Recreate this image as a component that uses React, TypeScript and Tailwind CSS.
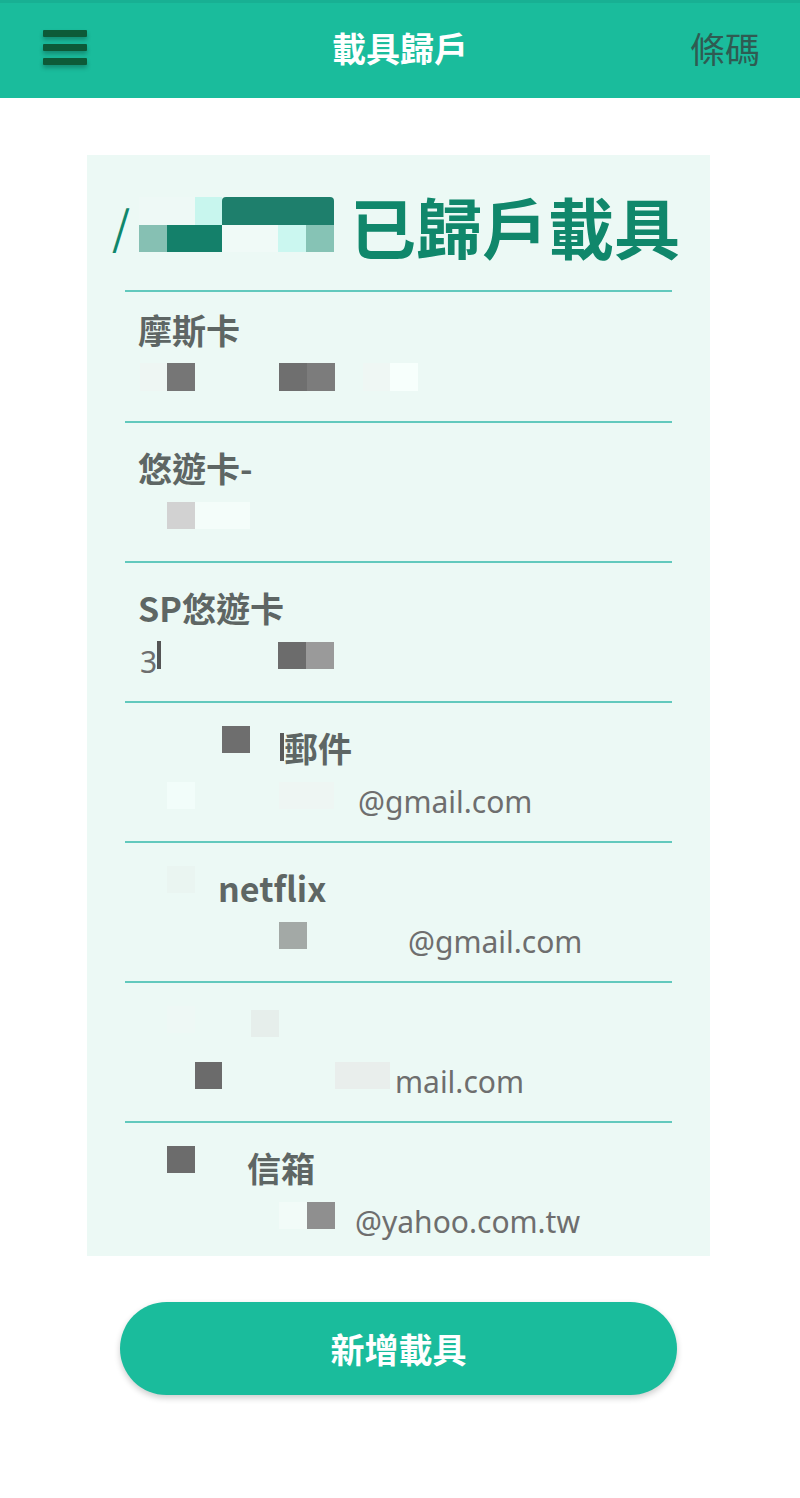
import React from 'react';

const cjk = { fontFamily: '"Noto Sans CJK TC", "Noto Sans", sans-serif' };
const latin = { fontFamily: '"Noto Sans", "Noto Sans CJK TC", sans-serif' };

function Row({ first, children }: { first?: boolean; children: React.ReactNode }) {
    return (
        <div>
            <div className="h-[2px] bg-[#62c9bd]" />
            <div className={first ? 'pt-[13px] pb-[20px]' : 'pt-[20px] pb-[22px]'}>{children}</div>
        </div>
    );
}

function Label({ children }: { children: React.ReactNode }) {
    return <div className="flex h-[48px] items-center text-[34px] font-bold text-[#5e6664]" style={cjk}>{children}</div>;
}

function Value({ children }: { children: React.ReactNode }) {
    return <div className="flex h-[48px] items-center text-[30px] text-[#6e6e6e]" style={latin}>{children}</div>;
}

export default function App() {
    return (
        <div className="min-h-[1498px] w-[800px] bg-white" style={cjk}>

            {/* Header */}
            <header className="grid h-[98px] grid-cols-[1fr_auto_1fr] items-center border-t-[3px] border-[#18b093] bg-[#1abc9c]">
                <div className="ml-[43px] flex w-[44px] flex-col gap-[7px] pb-[6px]">
                    <span className="h-[7px] rounded-[1px] bg-[#0d5a38] shadow-[0_3px_4px_rgba(0,0,0,0.25)]" />
                    <span className="h-[7px] rounded-[1px] bg-[#0d5a38] shadow-[0_3px_4px_rgba(0,0,0,0.25)]" />
                    <span className="h-[7px] rounded-[1px] bg-[#0d5a38] shadow-[0_3px_4px_rgba(0,0,0,0.25)]" />
                </div>
                <h1 className="pb-[6px] text-[34px] font-bold text-white">載具歸戶</h1>
                <div className="mr-[40px] justify-self-end pb-[4px] text-[35px] text-[#2f5b52]">條碼</div>
            </header>

            {/* Carrier list */}
            <div className="ml-[87px] mt-[57px] h-[1101px] w-[623px] overflow-hidden bg-[#ecf9f5] px-[38px]">
                <div className="flex h-[135px] items-center whitespace-nowrap pt-[4px]">
                    <span className="-ml-[13px] shrink-0 text-[46px] leading-none text-[#10876b]">/</span>
                    <div className="ml-[9px] flex shrink-0 flex-col">
                        <div className="flex">
                            <span className="h-[28px] w-[56px] bg-[#eef9f6]" />
                            <span className="h-[28px] w-[27px] bg-[#c8f6ee]" />
                            <span className="h-[28px] w-[112px] rounded-t-[4px] bg-[#1e7f6c]" />
                        </div>
                        <div className="flex">
                            <span className="h-[27px] w-[28px] bg-[#86c0b3]" />
                            <span className="h-[27px] w-[55px] bg-[#14806a]" />
                            <span className="h-[27px] w-[56px] bg-[#f0faf7]" />
                            <span className="h-[27px] w-[28px] bg-[#cbf7f0]" />
                            <span className="h-[27px] w-[28px] bg-[#86c3b5]" />
                        </div>
                    </div>
                    <span className="ml-[16px] shrink-0 text-[66px] font-bold leading-none text-[#10876b]">已歸戶載具</span>
                </div>

                <Row first>
                    <Label><span className="ml-[13px]">摩斯卡</span></Label>
                    <Value>
                        <span className="ml-[15px] h-[28px] w-[27px] bg-[#eef6f3]" />
                        <span className="h-[28px] w-[28px] bg-[#767676]" />
                        <span className="ml-[84px] h-[28px] w-[28px] bg-[#6f6f6f]" />
                        <span className="h-[28px] w-[28px] bg-[#7c7c7c]" />
                        <span className="ml-[28px] h-[28px] w-[27px] bg-[#eff7f4]" />
                        <span className="h-[28px] w-[28px] bg-[#f7fffc]" />
                    </Value>
                </Row>

                <Row>
                    <Label><span className="ml-[13px]">悠遊卡-</span></Label>
                    <Value>
                        <span className="ml-[42px] h-[27px] w-[28px] bg-[#d2d2d2]" />
                        <span className="h-[27px] w-[55px] bg-[#f4fdfa]" />
                    </Value>
                </Row>

                <Row>
                    <Label><span className="ml-[13px]">SP悠遊卡</span></Label>
                    <Value>
                        <span className="ml-[15px] mt-[12px]">3</span>
                        <span className="h-[28px] w-[4px] bg-[#555555]" />
                        <span className="ml-[117px] h-[27px] w-[28px] bg-[#6c6c6c]" />
                        <span className="h-[27px] w-[28px] bg-[#9a9a9a]" />
                    </Value>
                </Row>

                <Row>
                    <Label>
                        <span className="mb-[16px] ml-[97px] h-[27px] w-[28px] bg-[#6e6e6e]" />
                        <span className="ml-[30px] h-[28px] w-[4px] bg-[#5a5a5a]" />
                        <span>郵件</span>
                    </Label>
                    <Value>
                        <span className="ml-[42px] h-[27px] w-[28px] bg-[#f2fdfa]" />
                        <span className="ml-[84px] h-[27px] w-[55px] bg-[#eef6f3]" />
                        <span className="ml-[24px] mt-[12px]">@gmail.com</span>
                    </Value>
                </Row>

                <Row>
                    <Label>
                        <span className="mb-[16px] ml-[42px] h-[27px] w-[28px] bg-[#eaf5f1]" />
                        <span className="ml-[23px]">netflix</span>
                    </Label>
                    <Value>
                        <span className="ml-[154px] h-[27px] w-[28px] bg-[#a3a9a6]" />
                        <span className="ml-[101px] mt-[12px]">@gmail.com</span>
                    </Value>
                </Row>

                <Row>
                    <Label>
                        <span className="mb-[16px] ml-[42px] h-[27px] w-[28px] bg-[#eef8f5]" />
                        <span className="mb-[8px] ml-[56px] h-[27px] w-[28px] bg-[#e6eeeb]" />
                    </Label>
                    <Value>
                        <span className="ml-[70px] h-[27px] w-[27px] bg-[#6b6b6b]" />
                        <span className="ml-[113px] h-[27px] w-[55px] bg-[#e9eeec]" />
                        <span className="ml-[5px] mt-[12px]">mail.com</span>
                    </Value>
                </Row>

                <Row>
                    <Label>
                        <span className="mb-[16px] ml-[42px] h-[27px] w-[28px] bg-[#6c6c6c]" />
                        <span className="ml-[52px]">信箱</span>
                    </Label>
                    <Value>
                        <span className="ml-[154px] h-[27px] w-[28px] bg-[#f2fbf8]" />
                        <span className="h-[27px] w-[28px] bg-[#8f8f8f]" />
                        <span className="ml-[20px] mt-[12px]">@yahoo.com.tw</span>
                    </Value>
                </Row>
            </div>

            {/* Add button */}
            <div className="mt-[46px] flex pl-[120px]">
                <button className="h-[93px] w-[557px] rounded-full bg-[#1abc9c] text-[34px] font-bold text-white shadow-[0_3px_6px_rgba(0,0,0,0.2)]" style={cjk}>
                    新增載具
                </button>
            </div>
        </div>
    );
}
